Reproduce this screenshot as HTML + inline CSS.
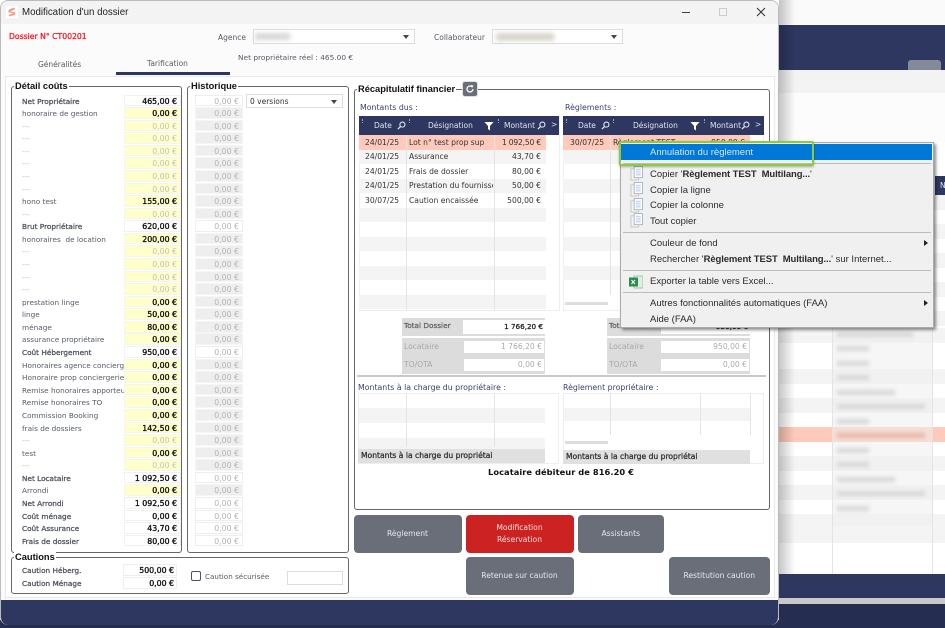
<!DOCTYPE html>
<html lang="fr"><head><meta charset="utf-8"><title>Modification d'un dossier</title>
<style>
*{box-sizing:border-box}
html,body{margin:0;padding:0;width:945px;height:628px;overflow:hidden;background:#fff}
body{font-family:"DejaVu Sans","Liberation Sans",sans-serif;font-size:7.5px;color:#555b66;position:relative}
#root{position:absolute;left:0;top:0;width:945px;height:628px;overflow:hidden;filter:blur(.35px)}
.a{position:absolute;white-space:nowrap}
#win{position:absolute;left:0;top:0;width:779px;height:625px;background:#fbfbfb;border:1px solid #bbb;border-bottom:0;border-radius:8px;overflow:hidden}
#win>*{margin:-1px 0 0 -1px}
.fs{position:absolute;border:1px solid #666;border-radius:3px;background:#fff}
.lg{position:absolute;background:#fff;font-family:"Liberation Sans",sans-serif;font-weight:bold;color:#111;font-size:9.3px;padding:0 1px;height:11px;line-height:11px;white-space:nowrap}
.col{position:absolute}
.r{height:12.586px;position:relative;white-space:nowrap}
.r span{position:absolute;left:0;top:1px;line-height:11px;width:102px;overflow:hidden;font-size:7.3px}
.r b{position:absolute;left:102px;top:0;width:57px;height:11.6px;line-height:11.6px;text-align:right;padding-right:3px;font-weight:normal;-webkit-text-stroke:.35px #111;color:#111;background:#fff;border:1px solid #f1f1f1;font-size:7.8px}
.y b{background:#ffffcc;border-color:#f4f4f0}
.z b{color:#c2c2b8;-webkit-text-stroke:0}
.z span{color:#bbb}
.t span{-webkit-text-stroke:.3px #50545e;color:#50545e}
.h{height:12.586px;position:relative}
.h b{position:absolute;left:0;top:0;width:48px;height:11.6px;line-height:11.6px;text-align:right;padding-right:3px;font-weight:normal;color:#b4b4b4;background:#eee;border:1px solid #f5f5f5;font-size:7.8px}
.h.w b{background:#fff;border-color:#eee}
.sel{position:absolute;background:#fff;border:1px solid #ddd;color:#333}
.sel:after{content:"";position:absolute;right:5px;top:5px;border:3.5px solid transparent;border-top:4px solid #444;border-bottom:0}
.tb{position:absolute;background:#fff;border:1px solid #eee}
.hd{position:absolute;height:19px;background:#2e3760;color:#dfe2ee;line-height:19px}
.hd span{position:absolute;top:0}
.hd svg{position:absolute}
.hd i{position:absolute;top:3px;width:1px;height:4px;border-left:1px dotted #9aa}
.row{position:absolute;height:14.5px;line-height:14.5px;color:#333;font-size:7.6px}
.row span{position:absolute;top:.5px;white-space:nowrap;overflow:hidden}
.g{background:#f4f4f4}
.p{background:#ffcabb}
.vl{position:absolute;width:1px;background:#e4e4e4}
.bl{position:absolute;color:#3a4270;font-size:7.8px;white-space:nowrap}
.tt{position:absolute;background:#dcdcdc}
.tt i{position:absolute;font-style:normal;white-space:nowrap;color:#a8a8a8;font-size:7.6px}
.tt b{position:absolute;background:#fff;text-align:right;padding-right:2px;font-weight:normal;color:#aaa;font-size:7.6px;height:12px;line-height:12px}
.sb{-webkit-text-stroke:.3px}
.btn{position:absolute;background:#6a6e79;color:#e6e7ea;border-radius:4px;text-align:center;display:flex;align-items:center;justify-content:center;line-height:11.5px;font-size:7.6px}
.sum{position:absolute;background:#e0e0e0;height:14px;line-height:14px;-webkit-text-stroke:.3px #333;color:#333;padding-left:3px;font-size:7.6px;overflow:hidden;white-space:nowrap}
#menu{position:absolute;left:620px;top:141.500px;width:314px;height:186.500px;background:#f0f0f0;border:1px solid #aaa;box-shadow:2px 2px 3px rgba(0,0,0,.45);font-family:"Liberation Sans",sans-serif;font-size:9.5px;color:#2b2b2b}
#menu .m{position:absolute;left:29px;white-space:nowrap;line-height:14px;height:14px}
#menu .m b{letter-spacing:-.1px}
#menu .s{position:absolute;left:2px;right:2px;height:1px;background:#bdbdbd}
#menu svg{position:absolute}
#menu .ar{position:absolute;left:303px;border:3px solid transparent;border-left:4px solid #222;border-right:0}
.bg{position:absolute;left:779px;width:166px;height:14.5px}
.bt{position:absolute;left:837px;height:5px;background:#d6d6d6;filter:blur(2px)}
</style></head><body>
<svg width="0" height="0" style="position:absolute"><defs>
<symbol id="mag" viewBox="0 0 10 10"><circle cx="6" cy="4" r="2.8" fill="none" stroke="#e6e8f2" stroke-width="1.2"/><path d="M4 6 1 9" stroke="#e6e8f2" stroke-width="1.4"/></symbol>
<symbol id="fun" viewBox="0 0 10 10"><path d="M.5 1h9L6 5v4.5L4 8V5z" fill="#fff"/></symbol>
<symbol id="cp" viewBox="0 0 14 16"><rect x="1" y="3" width="8" height="12" fill="#f3f3f3" stroke="#c4c4c4"/><rect x="4.500" y=".5" width="9" height="12" fill="#fbfbfb" stroke="#aab4c2"/><path d="M6.500 3.500h5M6.500 5.500h5M6.500 7.500h5M6.500 9.500h5" stroke="#b3cdea"/></symbol>
</defs></svg>
<div id="root">

<!-- background application -->
<div class="a" style="left:779px;top:0;width:166px;height:628px;background:#fff"></div>
<div class="a" style="left:779px;top:0;width:166px;height:24px;background:#fafafa"></div>
<div class="a" style="left:779px;top:25px;width:166px;height:45px;background:#2e3760"></div>
<div class="a" style="left:908px;top:60px;width:33px;height:10px;background:#858a9b;border-radius:3px 3px 0 0"></div>
<div class="a" style="left:779px;top:70px;width:166px;height:23px;background:#f3f3f3"></div>
<div class="a" style="left:779px;top:93px;width:166px;height:50px;background:#fcfcfc"></div>
<div class="a" style="left:935px;top:176px;width:10px;height:19px;background:#2e3760;color:#dfe2ee;font-size:7.6px;line-height:19px;padding-left:5px">N</div>
<div class="bg g" style="top:195px"></div><div class="bg g" style="top:224px"></div><div class="bg g" style="top:253px"></div><div class="bg g" style="top:282px"></div><div class="bg g" style="top:311px"></div>
<div class="bg g" style="top:328px"></div><div class="bg g" style="top:369px"></div><div class="bg g" style="top:398px"></div>
<div class="bg p" style="top:427px"></div>
<div class="bg g" style="top:456px"></div><div class="bg g" style="top:485px"></div><div class="bg g" style="top:514px"></div><div class="bg g" style="top:528px"></div>
<div class="a" style="left:832px;top:328px;width:101px;height:198px;background:rgba(238,238,238,.55)"></div>
<div class="vl" style="left:832px;top:328px;height:246px"></div>
<div class="vl" style="left:932px;top:328px;height:246px"></div>
<div class="bt" style="top:332px;width:76px"></div><div class="bt" style="top:346px;width:32px"></div><div class="bt" style="top:361px;width:32px"></div><div class="bt" style="top:375px;width:32px"></div><div class="bt" style="top:390px;width:58px"></div><div class="bt" style="top:404px;width:88px"></div><div class="bt" style="top:419px;width:32px"></div>
<div class="bt" style="top:433px;width:88px;background:#e6b5a6"></div><div class="bt" style="top:448px;width:32px"></div><div class="bt" style="top:462px;width:32px"></div><div class="bt" style="top:477px;width:58px"></div><div class="bt" style="top:491px;width:88px"></div><div class="bt" style="top:506px;width:32px"></div>
<div class="a" style="left:779px;top:574px;width:166px;height:24px;background:#2e3760"></div>
<div class="a" style="left:779px;top:598px;width:166px;height:6px;background:#c9c9c9"></div>
<div class="a" style="left:779px;top:604px;width:166px;height:24px;background:#252d50"></div>
<div class="a" style="left:0;top:620px;width:945px;height:8px;background:#252d50"></div>
<div class="a" style="left:779px;top:0;width:16px;height:574px;background:linear-gradient(90deg,rgba(0,0,0,.22),rgba(0,0,0,0))"></div>

<!-- window -->
<div id="win">
<div class="a" style="left:0;top:0;width:779px;height:24px;background:#f3f3f3"></div>
<svg class="a" style="left:6px;top:6px" width="12" height="12" viewBox="0 0 12 12"><rect width="12" height="12" fill="#fff"/><path d="M3 3.500 8 1.500 9.500 3 4.500 5.500 9.500 6.500 9 9 3.500 10.500 2.500 9 7 7.500 2 6z" fill="#f4a08a"/></svg>
<div class="a" style="left:22px;top:6px;font-family:'Liberation Sans',sans-serif;font-size:9.7px;line-height:14px;color:#222">Modification d'un dossier</div>
<div class="a" style="left:682px;top:12px;width:8px;height:1px;background:#444"></div>
<div class="a" style="left:719px;top:8px;width:8px;height:8px;border:1px solid #ccc"></div>
<svg class="a" style="left:756px;top:7px" width="10" height="10" viewBox="0 0 10 10"><path d="M1 1 9 9M9 1 1 9" stroke="#333" stroke-width="1"/></svg>

<div class="a" style="left:9px;top:31px;color:#f0202a;-webkit-text-stroke:.3px #f0202a;font-size:7.7px;line-height:11px">Dossier N° CT00201</div>
<div class="a" style="left:218px;top:32px;line-height:11px">Agence</div>
<div class="sel" style="left:253px;top:29px;width:162px;height:15px"><div class="a" style="left:1px;top:3px;width:35px;height:7px;background:#d8d8d8;filter:blur(2px)"></div></div>
<div class="a" style="left:434px;top:32px;line-height:11px">Collaborateur</div>
<div class="sel" style="left:492px;top:29px;width:131px;height:15px"><div class="a" style="left:3px;top:3px;width:58px;height:8px;background:#d9d5cc;filter:blur(2.5px)"></div></div>
<div class="a" style="left:238px;top:52px;line-height:11px;font-size:7.4px">Net propriétaire réel : 465.00 €</div>
<div class="a" style="left:38px;top:59px;line-height:11px">Généralités</div>
<div class="a" style="left:147px;top:58px;line-height:11px">Tarification</div>
<div class="a" style="left:116px;top:72px;width:114px;height:3px;background:#2e3760"></div>
<div class="a" style="left:5px;top:76px;width:770px;height:522px;background:#fff;border:1px solid #e9e9e9"></div>

<!-- Détail coûts -->
<div class="fs" style="left:11px;top:86px;width:171px;height:467px"></div>
<div class="lg" style="left:14px;top:81px">Détail coûts</div>
<div class="col" style="left:22px;top:94.500px;width:160px">
<div class="r t"><span>Net Propriétaire</span><b>465,00 €</b></div>
<div class="r y"><span>honoraire de gestion</span><b>0,00 €</b></div>
<div class="r y z"><span>---</span><b>0,00 €</b></div>
<div class="r y z"><span>---</span><b>0,00 €</b></div>
<div class="r y z"><span>---</span><b>0,00 €</b></div>
<div class="r y z"><span>---</span><b>0,00 €</b></div>
<div class="r y z"><span>---</span><b>0,00 €</b></div>
<div class="r y z"><span>---</span><b>0,00 €</b></div>
<div class="r y"><span>hono test</span><b>155,00 €</b></div>
<div class="r y z"><span>---</span><b>0,00 €</b></div>
<div class="r t"><span>Brut Propriétaire</span><b>620,00 €</b></div>
<div class="r y"><span>honoraires&nbsp; de location</span><b>200,00 €</b></div>
<div class="r y z"><span>---</span><b>0,00 €</b></div>
<div class="r y z"><span>---</span><b>0,00 €</b></div>
<div class="r y z"><span>---</span><b>0,00 €</b></div>
<div class="r y z"><span>---</span><b>0,00 €</b></div>
<div class="r y"><span>prestation linge</span><b>0,00 €</b></div>
<div class="r y"><span>linge</span><b>50,00 €</b></div>
<div class="r y"><span>ménage</span><b>80,00 €</b></div>
<div class="r y"><span>assurance propriétaire</span><b>0,00 €</b></div>
<div class="r t"><span>Coût Hébergement</span><b>950,00 €</b></div>
<div class="r y"><span>Honoraires agence concierge</span><b>0,00 €</b></div>
<div class="r y"><span>Honoraire prop conciergerie</span><b>0,00 €</b></div>
<div class="r y"><span>Remise honoraires apporteur</span><b>0,00 €</b></div>
<div class="r y"><span>Remise honoraires TO</span><b>0,00 €</b></div>
<div class="r y"><span>Commission Booking</span><b>0,00 €</b></div>
<div class="r y"><span>frais de dossiers</span><b>142,50 €</b></div>
<div class="r y z"><span>---</span><b>0,00 €</b></div>
<div class="r y"><span>test</span><b>0,00 €</b></div>
<div class="r y z"><span>---</span><b>0,00 €</b></div>
<div class="r t"><span>Net Locataire</span><b>1 092,50 €</b></div>
<div class="r y"><span>Arrondi</span><b>0,00 €</b></div>
<div class="r t"><span>Net Arrondi</span><b>1 092,50 €</b></div>
<div class="r t"><span>Coût ménage</span><b>0,00 €</b></div>
<div class="r t"><span>Coût Assurance</span><b>43,70 €</b></div>
<div class="r t"><span>Frais de dossier</span><b>80,00 €</b></div>
</div>

<!-- Historique -->
<div class="fs" style="left:187px;top:86px;width:162px;height:467px"></div>
<div class="lg" style="left:190px;top:81px">Historique</div>
<div class="sel" style="left:246px;top:94px;width:97px;height:14px;padding-left:3px;line-height:13px;font-size:7.5px;color:#333">0 versions</div>
<div class="col" style="left:195px;top:94.500px;width:48px">
<div class="h w"><b>0,00 €</b></div><div class="h"><b>0,00 €</b></div><div class="h"><b>0,00 €</b></div><div class="h"><b>0,00 €</b></div><div class="h"><b>0,00 €</b></div><div class="h"><b>0,00 €</b></div><div class="h"><b>0,00 €</b></div><div class="h"><b>0,00 €</b></div><div class="h"><b>0,00 €</b></div><div class="h"><b>0,00 €</b></div>
<div class="h w"><b>0,00 €</b></div><div class="h"><b>0,00 €</b></div><div class="h"><b>0,00 €</b></div><div class="h"><b>0,00 €</b></div><div class="h"><b>0,00 €</b></div><div class="h"><b>0,00 €</b></div><div class="h"><b>0,00 €</b></div><div class="h"><b>0,00 €</b></div><div class="h"><b>0,00 €</b></div><div class="h"><b>0,00 €</b></div>
<div class="h w"><b>0,00 €</b></div><div class="h"><b>0,00 €</b></div><div class="h"><b>0,00 €</b></div><div class="h"><b>0,00 €</b></div><div class="h"><b>0,00 €</b></div><div class="h"><b>0,00 €</b></div><div class="h"><b>0,00 €</b></div><div class="h"><b>0,00 €</b></div><div class="h"><b>0,00 €</b></div><div class="h"><b>0,00 €</b></div>
<div class="h w"><b>0,00 €</b></div><div class="h"><b>0,00 €</b></div><div class="h w"><b>0,00 €</b></div><div class="h w"><b>0,00 €</b></div><div class="h w"><b>0,00 €</b></div><div class="h w"><b>0,00 €</b></div>
</div>

<!-- Cautions -->
<div class="fs" style="left:11px;top:557px;width:338px;height:37px"></div>
<div class="lg" style="left:14px;top:552px">Cautions</div>
<div class="a" style="left:22px;top:565px;line-height:11px;font-size:7.3px;-webkit-text-stroke:.3px #50545e;color:#50545e">Caution Héberg.</div>
<div class="a" style="left:22px;top:578px;line-height:11px;font-size:7.3px;-webkit-text-stroke:.3px #50545e;color:#50545e">Caution Ménage</div>
<div class="a" style="left:123px;top:564px;width:54px;height:12px;line-height:12px;border:1px solid #eee;background:#fff;text-align:right;padding-right:2px;-webkit-text-stroke:.35px #111;color:#111;font-size:7.8px">500,00 €</div>
<div class="a" style="left:123px;top:577px;width:54px;height:12px;line-height:12px;border:1px solid #eee;background:#fff;text-align:right;padding-right:2px;-webkit-text-stroke:.35px #111;color:#111;font-size:7.8px">0,00 €</div>
<div class="a" style="left:191px;top:571px;width:10px;height:10px;border:1px solid #4a5178;border-radius:2px;background:#fff"></div>
<div class="a" style="left:205px;top:571px;line-height:11px;font-size:7.2px">Caution sécurisée</div>
<div class="a" style="left:287px;top:571px;width:56px;height:14px;border:1px solid #ddd;background:#fff"></div>

<!-- Récapitulatif -->
<div class="fs" style="left:353.500px;top:89px;width:416px;height:421px"></div>
<div class="lg" style="left:357px;top:84px">Récapitulatif financier</div>
<div class="a" style="left:462px;top:81px;width:16px;height:16px;background:#6a6e79;border-radius:3px;border:1px solid #ddd"></div>
<svg class="a" style="left:465px;top:84px" width="10" height="10" viewBox="0 0 10 10"><path d="M8 5A3 3 0 1 1 6.500 2.400" fill="none" stroke="#fff" stroke-width="1.300"/><path d="M5.500 1 8.500 1.500 7 4z" fill="#fff"/></svg>

<div class="bl" style="left:360px;top:102px;line-height:11px">Montants dus :</div>
<div class="tb" style="left:359px;top:116px;width:201px;height:195px"></div>
<div class="hd" style="left:359px;top:116px;width:200px">
<i style="left:3px"></i><i style="left:50px"></i><i style="left:139px"></i>
<span style="left:15px">Date</span><svg style="left:38px;top:5px" width="9" height="9"><use href="#mag"/></svg>
<span style="left:69px">Désignation</span><svg style="left:125px;top:5px" width="10" height="10"><use href="#fun"/></svg>
<span style="left:145px">Montant</span><svg style="left:178px;top:5px" width="9" height="9"><use href="#mag"/></svg>
<span style="left:192px;top:-1px">&gt;</span>
</div>
<div class="row p" style="left:359px;top:135px;width:187px"><span style="left:6px">24/01/25</span><span style="left:50px;width:86px">Lot n° test prop sup</span><span style="right:5px;letter-spacing:-.2px">1 092,50 €</span></div>
<div class="row g" style="left:359px;top:149.500px;width:187px"><span style="left:6px">24/01/25</span><span style="left:50px;width:86px">Assurance</span><span style="right:5px">43,70 €</span></div>
<div class="row" style="left:359px;top:164px;width:187px"><span style="left:6px">24/01/25</span><span style="left:50px;width:86px">Frais de dossier</span><span style="right:5px">80,00 €</span></div>
<div class="row g" style="left:359px;top:178.500px;width:187px"><span style="left:6px">24/01/25</span><span style="left:50px;width:84px">Prestation du fournisseur</span><span style="right:5px">50,00 €</span></div>
<div class="row" style="left:359px;top:193px;width:187px"><span style="left:6px">30/07/25</span><span style="left:50px;width:86px">Caution encaissée</span><span style="right:5px">500,00 €</span></div>
<div class="row g" style="left:359px;top:207.500px;width:187px"></div>
<div class="row g" style="left:359px;top:236.500px;width:187px"></div>
<div class="row g" style="left:359px;top:265.500px;width:187px"></div>
<div class="row g" style="left:359px;top:294.500px;width:187px;height:14px"></div>
<div class="vl" style="left:405.500px;top:135px;height:175px"></div>
<div class="vl" style="left:494px;top:135px;height:175px"></div>

<div class="bl" style="left:565px;top:102px;line-height:11px">Règlements :</div>
<div class="tb" style="left:563px;top:116px;width:201px;height:195px"></div>
<div class="hd" style="left:563px;top:116px;width:201px">
<i style="left:3px"></i><i style="left:50px"></i><i style="left:141px"></i>
<span style="left:15px">Date</span><svg style="left:38px;top:5px" width="9" height="9"><use href="#mag"/></svg>
<span style="left:70px">Désignation</span><svg style="left:127px;top:5px" width="10" height="10"><use href="#fun"/></svg>
<span style="left:147px">Montant</span><svg style="left:178px;top:5px" width="9" height="9"><use href="#mag"/></svg>
<span style="left:192px;top:-1px">&gt;</span>
</div>
<div class="row p" style="left:563px;top:135px;width:187px"><span style="left:7px">30/07/25</span><span style="left:50px;width:90px">Règlement TEST</span><span style="right:5px">950,00 €</span></div>
<div class="row g" style="left:563px;top:149.500px;width:187px"></div>
<div class="row g" style="left:563px;top:178.500px;width:187px"></div>
<div class="row g" style="left:563px;top:207.500px;width:187px"></div>
<div class="row g" style="left:563px;top:236.500px;width:187px"></div>
<div class="row g" style="left:563px;top:265.500px;width:187px"></div>
<div class="vl" style="left:610px;top:135px;height:160px"></div>
<div class="a" style="left:565px;top:302px;width:43px;height:3px;background:#ddd"></div>

<!-- totals -->
<div class="tt" style="left:402px;top:318px;width:143px;height:18px"><i class="sb" style="left:2px;top:3px;color:#666;font-size:7.3px">Total Dossier</i><b class="sb" style="left:61px;top:2px;width:82px;height:14px;line-height:14px;color:#222;font-size:7.2px">1 766,20 €</b></div>
<div class="tt" style="left:402px;top:338px;width:143px;height:36px"><i style="left:2px;top:4px">Locataire</i><b style="left:62px;top:3px;width:80px">1 766,20 €</b><i style="left:2px;top:22px">TO/OTA</i><b style="left:62px;top:21px;width:80px">0,00 €</b></div>
<div class="tt" style="left:607px;top:318px;width:143px;height:18px"><i class="sb" style="left:2px;top:3px;color:#666;font-size:7.3px">Total Versé</i><b class="sb" style="left:54px;top:2px;width:89px;height:14px;line-height:14px;color:#222;font-size:7.2px">950,00 €</b></div>
<div class="tt" style="left:607px;top:338px;width:143px;height:36px"><i style="left:2px;top:4px">Locataire</i><b style="left:54px;top:3px;width:88px">950,00 €</b><i style="left:2px;top:22px">TO/OTA</i><b style="left:54px;top:21px;width:88px">0,00 €</b></div>
<div class="a" style="left:357px;top:375px;width:409px;height:2px;background:#c8c8c8"></div>

<div class="bl" style="left:358px;top:382px;line-height:11px">Montants à la charge du propriétaire :</div>
<div class="tb" style="left:358px;top:393px;width:201px;height:71px"></div>
<div class="a g" style="left:359px;top:408px;width:186px;height:15px"></div>
<div class="a g" style="left:359px;top:438px;width:186px;height:11px"></div>
<div class="vl" style="left:405.500px;top:394px;height:53px"></div>
<div class="vl" style="left:494px;top:394px;height:53px"></div>
<div class="sum" style="left:358px;top:449px;width:187px">Montants à la charge du propriétai</div>

<div class="bl" style="left:563px;top:382px;line-height:11px">Règlement propriétaire :</div>
<div class="tb" style="left:563px;top:393px;width:201px;height:71px"></div>
<div class="a g" style="left:564px;top:408px;width:186px;height:13px"></div>
<div class="vl" style="left:610px;top:394px;height:41px"></div>
<div class="vl" style="left:700px;top:394px;height:41px"></div>
<div class="vl" style="left:750px;top:394px;height:41px"></div>
<div class="a" style="left:565px;top:441px;width:43px;height:3px;background:#ddd"></div>
<div class="sum" style="left:563px;top:450px;width:187px">Montants à la charge du propriétai</div>

<div class="a" style="left:488px;top:466px;font-weight:bold;color:#111;font-size:8.3px;line-height:12px;letter-spacing:.05px">Locataire débiteur de 816.20 €</div>

<!-- buttons -->
<div class="btn" style="left:353.500px;top:514.500px;width:108px;height:38px">Règlement</div>
<div class="btn" style="left:465.500px;top:514.500px;width:108px;height:38px;background:#cc2222;color:#f6dede">Modification<br>Réservation</div>
<div class="btn" style="left:578px;top:514.500px;width:85.500px;height:38px">Assistants</div>
<div class="btn" style="left:465.500px;top:557px;width:108px;height:38px">Retenue sur caution</div>
<div class="btn" style="left:668.500px;top:557px;width:101.500px;height:38px">Restitution caution</div>

<div class="a" style="left:0;top:600px;width:779px;height:25px;background:#2e3760"></div>
</div>

<!-- context menu -->
<div id="menu">
<div class="a" style="left:0;top:1px;width:311px;height:16.500px;background:#0078d7"></div>
<div class="m" style="top:3.500px;color:#d8e8f5">Annulation du règlement</div>
<div class="s" style="top:20px"></div>
<svg style="left:9px;top:23px" width="13" height="15"><use href="#cp"/></svg>
<div class="m" style="top:25.500px">Copier '<b>Règlement TEST&nbsp; Multilang...</b>'</div>
<svg style="left:9px;top:39px" width="13" height="15"><use href="#cp"/></svg>
<div class="m" style="top:41px">Copier la ligne</div>
<svg style="left:9px;top:55px" width="13" height="15"><use href="#cp"/></svg>
<div class="m" style="top:56.500px">Copier la colonne</div>
<svg style="left:9px;top:70px" width="13" height="15"><use href="#cp"/></svg>
<div class="m" style="top:72.500px">Tout copier</div>
<div class="s" style="top:89.500px"></div>
<div class="m" style="top:94.500px">Couleur de fond</div><div class="ar" style="top:97px"></div>
<div class="m" style="top:110.500px">Rechercher '<b>Règlement TEST&nbsp; Multilang...</b>' sur Internet...</div>
<div class="s" style="top:127.500px"></div>
<svg style="left:8px;top:132px" width="14" height="14" viewBox="0 0 14 14"><rect x="5" y="1" width="9" height="12" fill="#dfeee3" stroke="#9cc7aa"/><rect x="0" y="2.500" width="9" height="9" fill="#2e8b4e"/><path d="M2.500 5 6 9M6 5 2.500 9" stroke="#fff"/></svg>
<div class="m" style="top:132.500px">Exporter la table vers Excel...</div>
<div class="s" style="top:149.500px"></div>
<div class="m" style="top:154.500px">Autres fonctionnalités automatiques (FAA)</div><div class="ar" style="top:157px"></div>
<div class="m" style="top:170.500px">Aide (FAA)</div>
</div>
<div class="a" style="left:618.500px;top:140.500px;width:195px;height:25px;border:2.500px solid #8ccb3c;border-radius:2px;box-shadow:0 1px 2px rgba(0,0,0,.3)"></div>

</div>
</body></html>
